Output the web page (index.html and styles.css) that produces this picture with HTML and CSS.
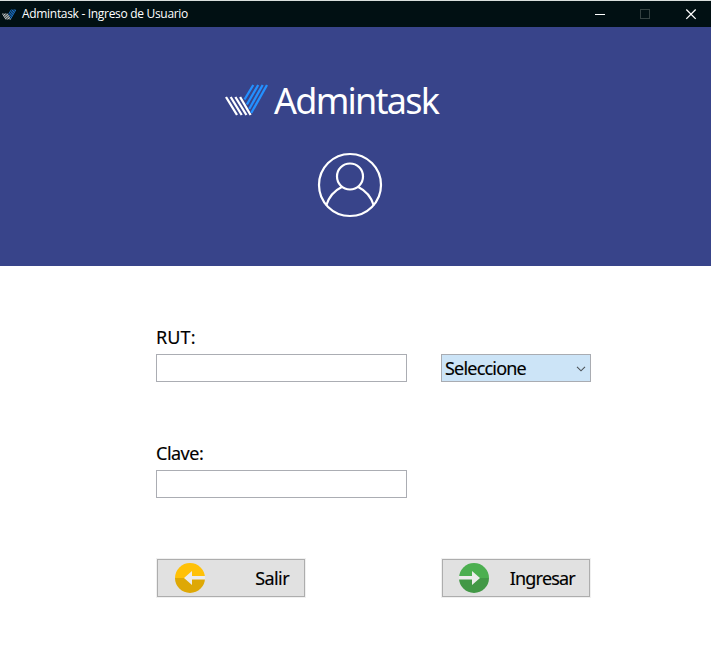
FILE: index.html
```html
<!DOCTYPE html>
<html lang="es">
<head>
<meta charset="utf-8">
<title>Admintask - Ingreso de Usuario</title>
<link rel="stylesheet" href="styles.css">
</head>
<body>
<header class="titlebar">
  <svg class="app-icon" width="14" height="11" viewBox="0 0 42 32"><use href="#mark"/></svg>
  <span class="title">Admintask - Ingreso de Usuario</span>
  <svg class="controls" width="131" height="26" viewBox="0 0 131 26" fill="none">
    <path d="M15 13.500h10" stroke="#fff"/>
    <rect x="60.500" y="8.500" width="9" height="9" stroke="#344141"/>
    <path d="M106.300 8.500l9.400 9.400M115.700 8.500l-9.400 9.400" stroke="#fff" stroke-width="1.300"/>
  </svg>
</header>
<section class="hero">
  <div class="brand">
    <svg class="logo" width="44" height="32" viewBox="0 0 44 32">
      <g id="mark" fill="none" stroke-width="2.300">
        <path stroke="#fff" d="M1 13l11 18M5.700 13l11 18M10.400 13l11 18M15.100 13l10.500 18"/>
        <path stroke="#2490ff" d="M19.500 15.500L28.300 1M21.900 20.500L33.200 1M24.200 25L37.700 1M26.200 29L42 1"/>
      </g>
    </svg>
    <h1 class="name">Admintask</h1>
  </div>
  <svg class="avatar" width="66" height="66" viewBox="0 0 66 66" fill="none" stroke="#fff" stroke-width="2.200">
    <circle cx="33" cy="33" r="31"/>
    <circle cx="33" cy="24.500" r="13"/>
    <path d="M9.200 53.500C12 44.500 17.500 38.500 24.800 35M41.200 35C48.500 38.500 54 44.500 56.800 53.500"/>
  </svg>
</section>
<main class="form">
  <label class="label rut" for="rut">RUT:</label>
  <div class="row">
    <input class="field" id="rut" type="text">
    <div class="select" role="combobox" tabindex="0">
      <span class="select-text">Seleccione</span>
      <svg class="chevron" width="10" height="6" viewBox="0 0 10 6" fill="none" stroke="#4d5358" stroke-width="1.100"><path d="M1 .8l4 4 4-4"/></svg>
    </div>
  </div>
  <label class="label second" for="clave">Clave:</label>
  <div class="row">
    <input class="field" id="clave" type="password">
  </div>
  <div class="row actions">
    <button class="button">
      <svg width="30" height="30" viewBox="0 0 30 30">
        <path fill="#ffc107" d="M0 15a15 15 0 0 1 30 0z"/>
        <path fill="#dea806" d="M0 15a15 15 0 0 0 30 0z"/>
        <path fill="#ececec" d="M9 15l8-7v5h13v3.500H17V22z"/>
      </svg>
      <span class="salir">Salir</span>
    </button>
    <button class="button enter">
      <svg width="30" height="30" viewBox="0 0 30 30">
        <path fill="#4caf50" d="M0 15a15 15 0 0 1 30 0z"/>
        <path fill="#429846" d="M0 15a15 15 0 0 0 30 0z"/>
        <path fill="#ececec" d="M21 15l-8-7v5H0v3.500h13V22z"/>
      </svg>
      <span class="ingresar">Ingresar</span>
    </button>
  </div>
</main>
</body>
</html>
```
FILE: styles.css
```css
* { box-sizing: border-box; }
body {
  margin: 0;
  width: 711px;
  height: 656px;
  overflow: hidden;
  background: #fff;
  color: #000;
  font: 18px/22px "Noto Sans", sans-serif;
}
.titlebar {
  display: flex;
  align-items: center;
  height: 27px;
  border-top: 1px solid #d9dfdd;
  padding-left: 2px;
  background: #011013;
  color: #fff;
  font: 12px/16px "Open Sans", sans-serif;
}
.title { margin-left: 6px; letter-spacing: -0.31px; white-space: nowrap; }
.controls { margin-left: auto; }
.hero { height: 239px; background: #38448a; padding-top: 52px; }
.brand { display: flex; height: 44px; padding-left: 225px; }
.logo { margin-top: 5px; }
.name {
  margin: 0 0 0 5px;
  color: #fff;
  font-size: 36px;
  font-weight: 400;
  line-height: 44px;
  letter-spacing: -1.75px;
}
.avatar { display: block; margin: 29px 0 0 317px; }
.form { padding: 60px 0 0 156px; }
.label { display: block; height: 28px; letter-spacing: -0.5px; }
.label.rut { letter-spacing: 0.1px; }
.label.second { margin-top: 60px; }
.row { display: flex; }
.field {
  width: 251px;
  height: 28px;
  border: 1px solid #abadb3;
  background: #fff;
  outline: 0;
}
.select {
  display: flex;
  align-items: center;
  justify-content: space-between;
  width: 150px;
  height: 28px;
  margin-left: 34px;
  padding: 0 4px 0 3px;
  border: 1px solid #a9acb2;
  background: #cce4f7;
}
.chevron { margin-top: 2px; }
.select-text { letter-spacing: -0.8px; }
.label, .select-text, .button { -webkit-text-stroke: 0.15px #000; }
.actions { margin-top: 60px; gap: 135px; }
.button {
  display: flex;
  align-items: center;
  justify-content: space-between;
  width: 150px;
  height: 40px;
  padding: 0 16px 0 18px;
  border: 1px solid #f0f0f0;
  background: #e1e1e1;
  box-shadow: inset 0 0 0 1px #adadad;
  color: #000;
  font: inherit;
  letter-spacing: -0.6px;
}
.button.enter { padding-left: 17px; padding-right: 15px; letter-spacing: -0.8px; }
```
